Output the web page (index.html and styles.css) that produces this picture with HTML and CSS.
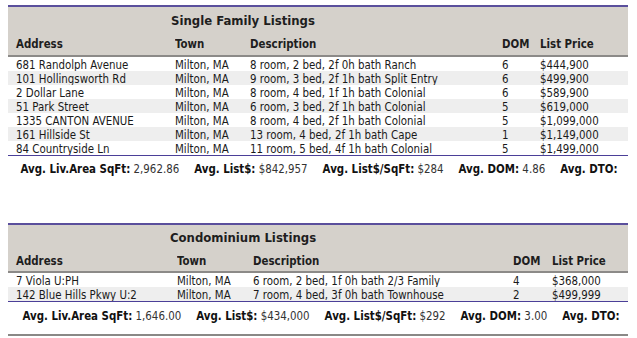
FILE: index.html
```html
<!DOCTYPE html>
<html>
<head>
<meta charset="utf-8">
<link rel="stylesheet" href="styles.css">
</head>
<body>
<div class="page">
  <section class="listing">
    <table class="grid sf">
      <colgroup>
        <col class="c1"><col class="c2"><col class="c3"><col class="c4"><col class="c5">
      </colgroup>
      <thead>
        <tr class="title-row"><th colspan="5" class="title">Single Family Listings</th></tr>
        <tr class="label-row">
          <th class="first">Address</th><th>Town</th><th>Description</th><th>DOM</th><th>List Price</th>
        </tr>
      </thead>
      <tbody>
        <tr><td class="first">681 Randolph Avenue</td><td>Milton, MA</td><td>8 room, 2 bed, 2f 0h bath Ranch</td><td>6</td><td>$444,900</td></tr>
        <tr class="alt"><td class="first">101 Hollingsworth Rd</td><td>Milton, MA</td><td>9 room, 3 bed, 2f 1h bath Split Entry</td><td>6</td><td>$499,900</td></tr>
        <tr><td class="first">2 Dollar Lane</td><td>Milton, MA</td><td>8 room, 4 bed, 1f 1h bath Colonial</td><td>6</td><td>$589,900</td></tr>
        <tr class="alt"><td class="first">51 Park Street</td><td>Milton, MA</td><td>6 room, 3 bed, 2f 1h bath Colonial</td><td>5</td><td>$619,000</td></tr>
        <tr><td class="first">1335 CANTON AVENUE</td><td>Milton, MA</td><td>8 room, 4 bed, 2f 1h bath Colonial</td><td>5</td><td>$1,099,000</td></tr>
        <tr class="alt"><td class="first">161 Hillside St</td><td>Milton, MA</td><td>13 room, 4 bed, 2f 1h bath Cape</td><td>1</td><td>$1,149,000</td></tr>
        <tr class="last"><td class="first">84 Countryside Ln</td><td>Milton, MA</td><td>11 room, 5 bed, 4f 1h bath Colonial</td><td>5</td><td>$1,499,000</td></tr>
      </tbody>
    </table>
    <div class="summary">
      <span><b>Avg. Liv.Area SqFt:</b> 2,962.86</span>
      <span><b>Avg. List$:</b> $842,957</span>
      <span><b>Avg. List$/SqFt:</b> $284</span>
      <span><b>Avg. DOM:</b> 4.86</span>
      <span><b>Avg. DTO:</b></span>
    </div>
  </section>

  <section class="listing condo">
    <table class="grid cd">
      <colgroup>
        <col class="c1"><col class="c2"><col class="c3"><col class="c4"><col class="c5">
      </colgroup>
      <thead>
        <tr class="title-row"><th colspan="5" class="title">Condominium Listings</th></tr>
        <tr class="label-row">
          <th class="first">Address</th><th>Town</th><th>Description</th><th>DOM</th><th>List Price</th>
        </tr>
      </thead>
      <tbody>
        <tr><td class="first">7 Viola U:PH</td><td>Milton, MA</td><td>6 room, 2 bed, 1f 0h bath 2/3 Family</td><td>4</td><td>$368,000</td></tr>
        <tr class="alt last"><td class="first">142 Blue Hills Pkwy U:2</td><td>Milton, MA</td><td>7 room, 4 bed, 3f 0h bath Townhouse</td><td>2</td><td>$499,999</td></tr>
      </tbody>
    </table>
    <div class="summary">
      <span><b>Avg. Liv.Area SqFt:</b> 1,646.00</span>
      <span><b>Avg. List$:</b> $434,000</span>
      <span><b>Avg. List$/SqFt:</b> $292</span>
      <span><b>Avg. DOM:</b> 3.00</span>
      <span><b>Avg. DTO:</b></span>
    </div>
    <div class="rule"></div>
  </section>
</div>
</body>
</html>
```
FILE: styles.css
```css
html, body {
  margin: 0;
  padding: 0;
  background: #ffffff;
}
body {
  font-family: "DejaVu Sans Condensed", "DejaVu Sans", sans-serif;
  font-stretch: condensed;
  font-size: 11.4px;
  color: #1a1a1a;
}
.page {
  padding: 5px 9px 0 8px;
  width: 620px;
}
.listing {
  display: flex;
  flex-direction: column;
}
.condo {
  margin-top: 41px;
}
.grid {
  width: 620px;
  border-collapse: collapse;
  table-layout: fixed;
  border-top: 2px solid #5a4f9c;
}
.grid th, .grid td {
  padding: 0;
  text-align: left;
  white-space: nowrap;
  overflow: hidden;
}
.grid thead {
  background: #d5d1cb;
}
.title-row th {
  height: 24px;
  padding-top: 1px;
  font-size: 13px;
  text-align: center;
  padding-right: 150px;
  vertical-align: middle;
  color: #1e1e1e;
}
.label-row th {
  height: 22px;
  padding-top: 1px;
  font-size: 11.4px;
  font-weight: bold;
  border-bottom: 2px solid #8c8a88;
  vertical-align: middle;
  color: #1e1e1e;
}
.grid td {
  height: 12px;
  line-height: 12px;
  padding-top: 2px;
}
.grid tr.alt td {
  background: #eeeeee;
}
.grid tr.last td {
  border-bottom: 1px solid #4b3f98;
}
.grid .first {
  padding-left: 8px;
}
.sf .c1 { width: 167px; }
.sf .c2 { width: 75px; }
.sf .c3 { width: 252px; }
.sf .c4 { width: 38px; }
.sf .c5 { width: 88px; }
.cd .c1 { width: 169px; }
.cd .c2 { width: 76px; }
.cd .c3 { width: 260px; }
.cd .c4 { width: 39px; }
.cd .c5 { width: 76px; }
.cd .title-row th { height: 22px; }
.cd .label-row th { height: 21px; padding-top: 2px; }
.summary {
  display: flex;
  justify-content: center;
  gap: 15px;
  height: 26px;
  align-items: center;
  padding-left: 2px;
  color: #333333;
}
.summary b {
  color: #111111;
}
.condo .summary {
  padding-left: 6px;
  padding-top: 1px;
  height: 25px;
}
.rule {
  margin-top: 6px;
  height: 2px;
  background: #8a8886;
}
```
